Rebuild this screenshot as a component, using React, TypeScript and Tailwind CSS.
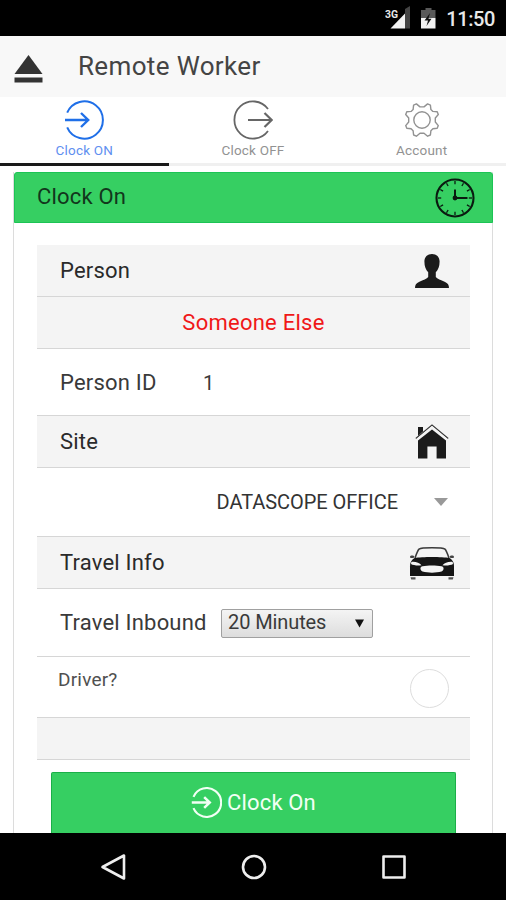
import type { ReactNode } from "react";

function ArrowIn({ className, strokeWidth = 2 }: { className: string; strokeWidth?: number }) {
  return (
    <svg viewBox="0 0 40 40" className={className} fill="none" stroke="currentColor" strokeWidth={strokeWidth}>
      <path d="M3.2 12.7A18.6 18.6 0 1 1 3.2 27.3" />
      <path d="M1 20H24M17 13L24.2 20L17 27" strokeWidth={strokeWidth * 1.2} />
    </svg>
  );
}

function ArrowOut({ className }: { className: string }) {
  return (
    <svg viewBox="0 0 40 40" className={className} fill="none" stroke="currentColor" strokeWidth="1.8">
      <path d="M35 9A18.6 18.6 0 1 0 35 31" />
      <path d="M15 20H38M31.5 13L38.7 20L31.5 27" strokeWidth="2.2" />
    </svg>
  );
}

function Gear() {
  return (
    <svg viewBox="0 0 36 36" className="h-9 w-9" fill="none" stroke="currentColor" strokeWidth="1.4" strokeLinejoin="round">
      <circle cx="18" cy="18" r="8.2" />
      <path d="M12.4 1.9L16 4.9H20L23.6 1.9L26.4 3.1L26.9 7.6L28.9 9.4L33.2 9.8L34.3 12.5L31.3 16V20L34.3 23.6L33.2 26.3L28.9 26.8L26.9 28.7L26.4 33L23.6 34.2L20 31.2H16L12.4 34.2L9.6 33L9.1 28.7L7.1 26.8L2.8 26.3L1.7 23.6L4.7 20V16L1.7 12.5L2.8 9.8L7.1 9.4L9.1 7.6L9.6 3.1Z" />
    </svg>
  );
}

const clockTicks = [0, 30, 60, 90, 120, 150, 180, 210, 240, 270, 300, 330];

function Clock() {
  return (
    <svg viewBox="0 0 40 40" className="h-10 w-10 text-[#0a1a10]" fill="none" stroke="currentColor">
      <circle cx="20" cy="20" r="18.5" strokeWidth="2.1" />
      {clockTicks.map((deg) => (
        <path key={deg} d="M20 3V6.2" strokeWidth="1.3" transform={`rotate(${deg} 20 20)`} />
      ))}
      <path d="M20 20V11.5" strokeWidth="2" />
      <path d="M20 20H32.5" strokeWidth="2" />
      <circle cx="20" cy="20" r="2.4" fill="currentColor" stroke="none" />
    </svg>
  );
}

function PersonIcon() {
  return (
    <svg viewBox="0 0 34 34" className="h-[34px] w-[34px]" fill="#1b1b1b">
      <path d="M17 0C21.6 0 24.6 3 24.6 7.6C24.6 12.5 23.2 15.8 20.8 18.3V23C22 25 26 26.2 29.6 27.7C33 29.2 34 31 34 34H0C0 31 1 29.2 4.4 27.7C8 26.2 12 25 13.2 23V18.3C10.8 15.8 9.4 12.5 9.4 7.6C9.4 3 12.4 0 17 0Z" />
    </svg>
  );
}

function HouseIcon() {
  return (
    <svg viewBox="0 0 34 35" className="h-[35px] w-[34px]">
      <path d="M3 3H8V7.5L3 12Z" fill="#1b1b1b" />
      <path d="M17 5.5L31 16.5V34.5H21.6V22.5H12.4V34.5H3V16.5Z" fill="#1b1b1b" />
      <path d="M.8 14.4L17 1L33.2 14.4" fill="none" stroke="#3a3a3a" strokeWidth="1.3" />
      <path d="M1.8 15.5L17 2.9L32.2 15.5" fill="none" stroke="#f4f4f4" strokeWidth="1.5" />
    </svg>
  );
}

function CarIcon() {
  return (
    <svg viewBox="0 0 46 34" className="h-[34px] w-[46px]">
      <path d="M6 12C7.4 8 8.6 4.5 10 3.1C12.5 1.3 33.5 1.3 36 3.1C37.4 4.5 38.6 8 40 12" fill="none" stroke="#3a3a3a" strokeWidth="1.5" />
      <path d="M1 11C1 9.3 4.5 9.2 5.4 10.5L4.5 12H1.5ZM45 11C45 9.3 41.5 9.2 40.6 10.5L41.5 12H44.5Z" fill="#444" />
      <path d="M5.5 12C13 10.6 33 10.6 40.5 12C44 14 45 17 45 20.5V30H1V20.5C1 17 2 14 5.5 12Z" fill="#151515" />
      <path d="M2.3 16C6.5 15.4 10.5 17 12.5 19.3C8.5 19.8 4 19.3 2 18ZM43.7 16C39.5 15.4 35.5 17 33.5 19.3C37.5 19.8 42 19.3 44 18Z" fill="#f4f4f4" />
      <path d="M13.5 20.3C19 19.3 27 19.3 32.5 20.3C35.5 21 35 24.2 32.5 25.6C27 27 19 27 13.5 25.6C11 24.2 10.5 21 13.5 20.3Z" fill="#f4f4f4" />
      <path d="M1.5 31.2H6.5V33.4H2.2ZM39.5 31.2H44.5L43.8 33.4H39.5Z" fill="#555" />
    </svg>
  );
}

function SectionRow({ title, children }: { title: string; children: ReactNode }) {
  return (
    <div className="flex h-[52px] shrink-0 items-center border-b border-[#d6d6d6] bg-[#f4f4f4] pl-[23px]">
      <h2 className="grow text-[22px] leading-[26px] tracking-[0.2px] text-[#2a2a2a]">{title}</h2>
      {children}
    </div>
  );
}

export default function App() {
  return (
    <div className="flex h-[900px] w-[506px] flex-col overflow-hidden bg-white font-['Roboto',sans-serif]">
      <div className="flex h-[36px] shrink-0 items-center justify-end bg-black pr-[11px] pt-[2px]">
        <svg viewBox="0 0 60 26" className="mr-px h-[26px] w-[60px]">
          <path d="M20 3L25 0V22.5H20Z" fill="#444" />
          <path d="M5.5 22.5L20 7.500V22.5Z" fill="#f2f2f2" />
          <text x="0" y="12" fontSize="11" fontWeight="700" fill="#e8e8e8" stroke="#000" strokeWidth="2" paintOrder="stroke" textLength="13" lengthAdjust="spacingAndGlyphs">3G</text>
          <path d="M40.5 2H46.5V4H50.5V12H36V4H40.5Z" fill="#595959" />
          <path d="M36 12H50.5V22.5H36Z" fill="#f2f2f2" />
          <path d="M45 7L39.5 14.5H43L41.5 20L46.5 12.8H43.5Z" fill="#111" />
        </svg>
        <span className="text-[20px] font-medium leading-6 tracking-[-0.4px] text-[#e8e8e8]">11:50</span>
      </div>

      <header className="flex h-[61px] shrink-0 items-center bg-[#f8f8f8] pl-[14px]">
        <svg viewBox="0 0 30 30" className="mt-[4px] h-[30px] w-[30px]" fill="#333">
          <path d="M14.5 1L28.5 20H.5Z" />
          <path d="M.5 23.5H28.5V28.5H.5Z" />
        </svg>
        <h1 className="mb-[2px] ml-[34px] text-[26px] leading-[30px] tracking-[0.35px] text-[#444]">Remote Worker</h1>
      </header>

      <nav className="grid h-[69px] shrink-0 grid-cols-3 text-[13.5px] leading-4 tracking-[0.2px] text-[#929292]">
        <div className="flex flex-col items-center border-b-[3px] border-[#1a1a1a] pt-[3px] text-[#5f8ff0]">
          <ArrowIn className="h-10 w-10 text-[#1f6fe8]" />
          <span className="mt-[2px]">Clock ON</span>
        </div>
        <div className="flex flex-col items-center border-b-[3px] border-[#f0f0f0] pt-[3px]">
          <ArrowOut className="h-10 w-10 text-[#666]" />
          <span className="mt-[2px]">Clock OFF</span>
        </div>
        <div className="flex flex-col items-center border-b-[3px] border-[#f0f0f0] pt-[5px]">
          <Gear />
          <span className="mt-[4px]">Account</span>
        </div>
      </nav>

      <main className="flex min-h-0 grow flex-col overflow-hidden px-[13px] pt-[6px]">
        <section className="flex grow flex-col border-x border-[#dcdcdc]">
          <div className="-mr-px flex h-[51px] shrink-0 items-center rounded-t-[3px] border border-[#1cc455] bg-[#36cf62] pl-[22px] pr-[17px]">
            <h2 className="mb-[2px] grow text-[22px] leading-[26px] tracking-[0.2px] text-[#12361c]">Clock On</h2>
            <Clock />
          </div>

          <div className="ml-[23px] mr-[22px] mt-[22px] flex flex-col">
            <SectionRow title="Person"><div className="mr-[21px]"><PersonIcon /></div></SectionRow>
            <div className="flex h-[52px] items-center justify-center border-b border-[#d6d6d6] bg-[#f4f4f4] text-[22px] leading-[26px] tracking-[0.25px] text-[#f01818]">
              Someone Else
            </div>
            <div className="flex h-[67px] items-center border-b border-[#d6d6d6] pl-[23px] pt-px text-[22px] leading-[26px] tracking-[0.2px] text-[#3a3a3a]">
              <span className="w-[143px]">Person ID</span>
              <span className="text-[20px]">1</span>
            </div>
            <SectionRow title="Site"><div className="mr-[21px]"><HouseIcon /></div></SectionRow>
            <div className="flex h-[69px] items-center justify-end border-b border-[#d6d6d6] pb-px pr-[22px] text-[20px] leading-6 tracking-[-0.05px] text-[#333]">
              <span>DATASCOPE OFFICE</span>
              <svg viewBox="0 0 14 8" className="ml-[36px] h-2 w-[14px]" fill="#999"><path d="M0 0H14L7 8Z" /></svg>
            </div>
            <SectionRow title="Travel Info"><div className="mr-[15px]"><CarIcon /></div></SectionRow>
            <div className="flex h-[68px] items-center border-b border-[#d6d6d6] pl-[23px] pt-px text-[#3a3a3a]">
              <span className="w-[161px] text-[22px] leading-[26px] tracking-[0.2px]">Travel Inbound</span>
              <div className="flex h-[29px] w-[152px] items-center justify-between rounded-[2px] border border-[#a0a0a0] bg-linear-to-b from-[#f4f4f4] to-[#dddddd] pl-[6px] pr-[8px]">
                <span className="mb-[2px] text-[20px] leading-6 tracking-[-0.1px]">20 Minutes</span>
                <svg viewBox="0 0 9 9" className="h-[9px] w-[9px]" fill="#111"><path d="M0 .5H9L4.5 8.5Z" /></svg>
              </div>
            </div>
            <div className="flex h-[61px] items-center justify-between border-b border-[#d6d6d6] pl-[21px] pr-[21px]">
              <span className="mb-[15px] text-[19px] leading-6 tracking-[0.2px] text-[#505050]">Driver?</span>
              <div className="mt-[2px] h-[39px] w-[39px] rounded-full border border-[#dddddd]" />
            </div>
            <div className="h-[42px] border-b border-[#d6d6d6] bg-[#f4f4f4]" />
          </div>

          <button className="ml-[37px] mr-[36px] mt-[12px] flex h-[62px] shrink-0 items-center justify-center rounded-t-[2px] border border-b-0 border-[#1aaf48] bg-[#36cf62] pb-[2px] text-[22px] leading-[26px] tracking-[0.15px] text-[#f2fff5]">
            <ArrowIn className="mr-[5px] h-[31px] w-[31px]" strokeWidth={2.7} />
            <span>Clock On</span>
          </button>
        </section>
      </main>

      <footer className="flex h-[67px] shrink-0 items-center justify-center gap-[112px] bg-black pl-px">
        <svg viewBox="0 0 28 28" className="h-7 w-7" fill="none" stroke="#eee" strokeWidth="2.6" strokeLinejoin="round"><path d="M24 2.5V25.5L2.5 14Z" /></svg>
        <svg viewBox="0 0 28 28" className="h-7 w-7" fill="none" stroke="#eee" strokeWidth="2.6"><circle cx="14" cy="14" r="11" /></svg>
        <svg viewBox="0 0 28 28" className="h-7 w-7" fill="none" stroke="#eee" strokeWidth="2.6" strokeLinejoin="round"><path d="M3.5 3.5H24.5V24.5H3.5Z" /></svg>
      </footer>
    </div>
  );
}
